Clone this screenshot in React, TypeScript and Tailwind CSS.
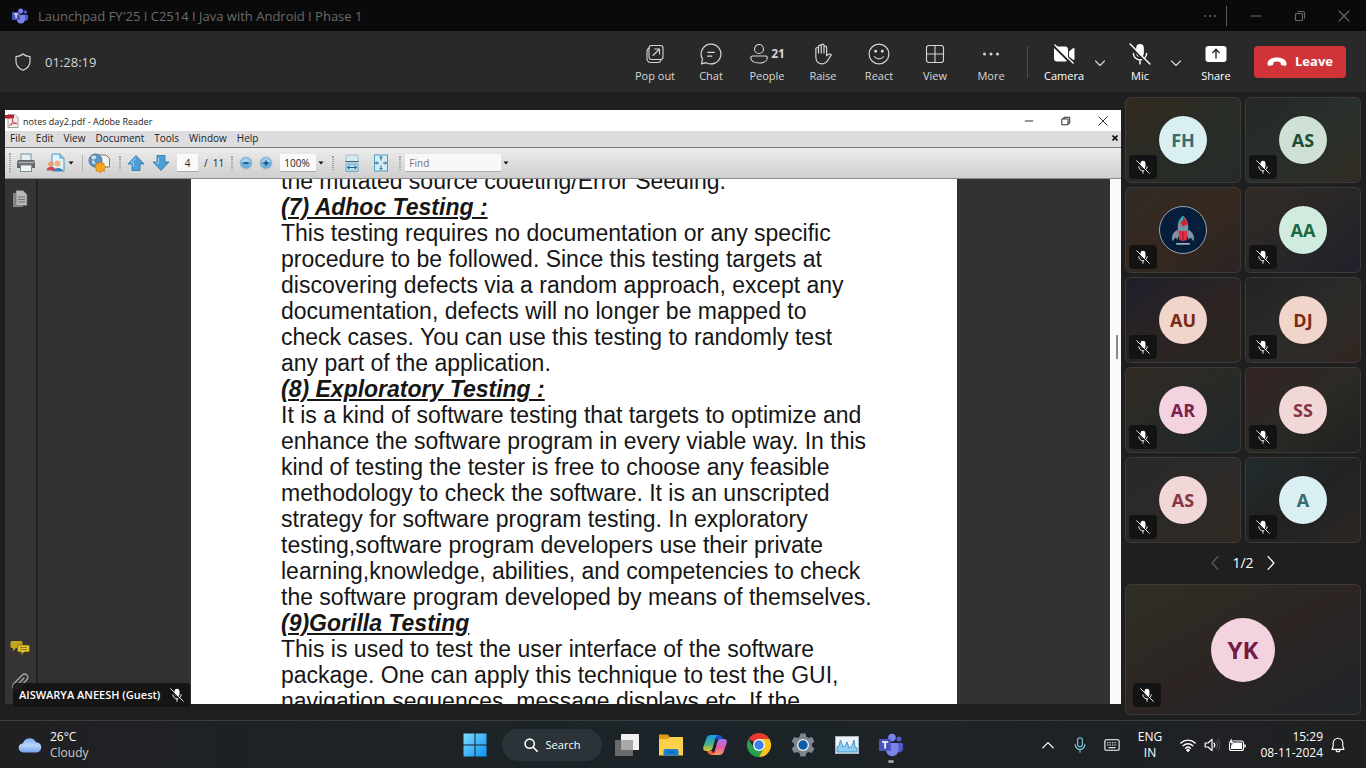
import type { ReactNode } from "react";

const ui = "font-['Open_Sans','Noto_Sans',sans-serif]";

function TeamsLogo({ className }: { className: string }) {
  return (
    <svg viewBox="0 0 24 24" className={className} aria-hidden="true">
      <circle cx="20" cy="6" r="2.6" fill="#5059c9" />
      <path d="M17 10h6a1 1 0 0 1 1 1v5a4 4 0 0 1-7 2z" fill="#5059c9" />
      <circle cx="13" cy="4.6" r="3.8" fill="#7b83eb" />
      <path d="M7 10h11.500a1 1 0 0 1 1 1v6a6 6 0 0 1-12.500 0z" fill="#7b83eb" />
      <rect x="0" y="6" width="12" height="12" rx="1.200" fill="#4b53bc" />
      <path d="M3 9h6.200M6.100 9v6.500" stroke="#fff" strokeWidth="1.700" fill="none" />
    </svg>
  );
}

function Line({ children, className = "size-5" }: { children: ReactNode; className?: string }) {
  return (
    <svg
      viewBox="0 0 20 20"
      className={className}
      fill="none"
      stroke="currentColor"
      strokeWidth="1.1"
      strokeLinecap="round"
      strokeLinejoin="round"
      aria-hidden="true"
    >
      {children}
    </svg>
  );
}

function MicOff({ className, cut }: { className: string; cut: string }) {
  return (
    <svg viewBox="0 0 20 20" className={className} fill="none" aria-hidden="true">
      <rect x="6.500" y="1" width="7" height="11.500" rx="3.500" fill="currentColor" />
      <path d="M4 9.500a6 6 0 0 0 12 0M10 15.500V19" stroke="currentColor" strokeWidth="1.300" strokeLinecap="round" />
      <path d="M1 3l17 17" stroke={cut} strokeWidth="1.700" />
      <path d="M1 1l18 18" stroke="currentColor" strokeWidth="1.300" strokeLinecap="round" />
    </svg>
  );
}

function Chevron({ d, className }: { d: string; className: string }) {
  return (
    <svg viewBox="0 0 12 12" className={className} fill="none" stroke="currentColor" strokeWidth="1.1" strokeLinecap="round" strokeLinejoin="round" aria-hidden="true">
      <path d={d} />
    </svg>
  );
}

function ToolButton({ label, children, bright }: { label: string; children: ReactNode; bright?: boolean }) {
  return (
    <button
      type="button"
      className={
        bright
          ? "flex w-14 flex-col items-center gap-1 pt-1 text-[11px] leading-4 text-white"
          : "flex w-14 flex-col items-center gap-1 pt-1 text-[11px] leading-4 text-[#d6d6d6]"
      }
    >
      <span className="flex h-5 items-center gap-0.5">{children}</span>
      <span className="whitespace-nowrap">{label}</span>
    </button>
  );
}

function TitleBar() {
  return (
    <header className="flex h-[31px] shrink-0 items-center bg-[#0a0a0a] pl-3 text-[#6a6a6a]">
      <TeamsLogo className="size-4" />
      <h1 className="ml-2.5 text-[13px] leading-4">Launchpad FY'25 I C2514 I Java with Android I Phase 1</h1>
      <button type="button" aria-label="More options" className="ml-auto flex h-5 w-8 items-center justify-center">
        <svg viewBox="0 0 12 4" className="h-1 w-3" fill="currentColor"><circle cx="1" cy="2" r="1" /><circle cx="6" cy="2" r="1" /><circle cx="11" cy="2" r="1" /></svg>
      </button>
      <span className="mr-[7px] h-5 w-px bg-[#5c5c5c]" />
      <button type="button" aria-label="Minimize" className="flex w-11 justify-center">
        <Chevron d="M1 6h10" className="size-3" />
      </button>
      <button type="button" aria-label="Restore" className="flex w-11 justify-center">
        <Chevron d="M2.500 3.500h5a1 1 0 0 1 1 1v5a1 1 0 0 1-1 1h-5a1 1 0 0 1-1-1v-5a1 1 0 0 1 1-1zM4 1.500h4.500a2 2 0 0 1 2 2V8" className="size-3" />
      </button>
      <button type="button" aria-label="Close" className="flex w-11 justify-center">
        <Chevron d="M1 1l10 10M11 1L1 11" className="size-3" />
      </button>
    </header>
  );
}

function MeetingBar() {
  return (
    <div className="flex h-[61px] shrink-0 items-center bg-[#292929] pr-5 pl-[13px]">
      <Line>
        <path d="M10 2c2 1.700 4.200 2.400 7 2.500v5c0 4.300-2.600 7-7 8.700-4.400-1.700-7-4.400-7-8.700v-5C5.800 4.400 8 3.700 10 2z" stroke="#e4e4e4" />
      </Line>
      <time className="ml-3 text-[13px] leading-4 text-[#d6d6d6]">01:28:19</time>
      <nav aria-label="Meeting controls" className="ml-auto flex items-center">
        <ToolButton label="Pop out">
          <Line>
            <rect x="4" y="1.500" width="14" height="14" rx="2.500" />
            <path d="M4 4.200a3 3 0 0 0-2 3V15a3.500 3.500 0 0 0 3.500 3.500H13a3 3 0 0 0 2.800-2M8 11.500L14 5.500M9.500 5H14.500v5" />
          </Line>
        </ToolButton>
        <ToolButton label="Chat">
          <Line className="size-[22px]">
            <path d="M10 1a9 9 0 1 1-4.300 16.900L1.300 19l1-4.400A9 9 0 0 1 10 1zM7 8.500h6M7 12h3.700" />
          </Line>
        </ToolButton>
        <ToolButton label="People">
          <Line>
            <circle cx="10" cy="5" r="4.500" />
            <path d="M3.500 12h13A1.800 1.800 0 0 1 18.300 13.800c0 3.200-3.600 5.200-8.300 5.200s-8.300-2-8.300-5.200A1.800 1.800 0 0 1 3.500 12z" />
          </Line>
          <span className="text-[12px] font-bold">21</span>
        </ToolButton>
        <ToolButton label="Raise">
          <Line className="size-[22px]">
            <path d="M3.500 12.500V5.300a1.200 1.200 0 0 1 2.400 0V9M5.900 9V3.200a1.200 1.200 0 0 1 2.500 0V9M8.400 9V2.200a1.200 1.200 0 0 1 2.500 0V9M10.900 9V4a1.200 1.200 0 0 1 2.400 0v7.500c1-1.300 2.200-1.700 3.700-1.300.7.200.6.800.2 1.200-2.200 2-2.700 7.600-7.900 7.600-3.600 0-5.800-2.200-5.800-6.500" />
          </Line>
        </ToolButton>
        <ToolButton label="React">
          <Line className="size-[22px]">
            <circle cx="10" cy="10" r="9" />
            <path d="M6 12.500c2 2.600 6 2.600 8 0" />
            <circle cx="7" cy="7.500" r=".8" fill="currentColor" />
            <circle cx="13" cy="7.500" r=".8" fill="currentColor" />
          </Line>
        </ToolButton>
        <ToolButton label="View">
          <Line>
            <rect x="1.500" y="1.500" width="17" height="17" rx="2.500" />
            <path d="M10 1.500v17M1.500 10h17" />
          </Line>
        </ToolButton>
        <ToolButton label="More">
          <svg viewBox="0 0 20 20" className="size-5" fill="currentColor"><circle cx="3.500" cy="10" r="1.500" /><circle cx="10" cy="10" r="1.500" /><circle cx="16.500" cy="10" r="1.500" /></svg>
        </ToolButton>
        <span className="mx-2 h-8 w-px bg-[#4d4d4d]" />
        <ToolButton label="Camera" bright>
          <svg viewBox="0 0 22 22" className="size-[22px]" fill="currentColor">
            <rect x="1" y="3.500" width="14" height="15" rx="3" />
            <path d="M16 8.500l4-3.200c.7-.5 1.500-.2 1.500.7v10c0 .9-.8 1.200-1.500.7l-4-3.200z" />
            <path d="M1 3.500l18 18" stroke="#292929" strokeWidth="2" />
            <path d="M1.500 1.500l19 19" stroke="currentColor" strokeWidth="1.300" />
          </svg>
        </ToolButton>
        <button type="button" aria-label="Camera options" className="mr-1 flex w-4 justify-center pt-0.5 text-[#d6d6d6]">
          <Chevron d="M1.500 4L6 8.500 10.500 4" className="size-3" />
        </button>
        <ToolButton label="Mic" bright>
          <MicOff className="size-[22px]" cut="#292929" />
        </ToolButton>
        <button type="button" aria-label="Mic options" className="mr-1 flex w-4 justify-center pt-0.5 text-[#d6d6d6]">
          <Chevron d="M1.500 4L6 8.500 10.500 4" className="size-3" />
        </button>
        <ToolButton label="Share" bright>
          <svg viewBox="0 0 22 22" className="size-[22px]">
            <rect x="0.500" y="3" width="21" height="16" rx="3" fill="#fff" />
            <path d="M11 15.500V6.500M7.500 10L11 6.300 14.500 10" fill="none" stroke="#292929" strokeWidth="1.400" />
          </svg>
        </ToolButton>
        <button type="button" className="ml-2.5 flex h-8 w-[92px] items-center justify-center gap-2 rounded bg-[#d13438] text-[13px] font-bold text-white">
          <svg viewBox="0 0 20 10" className="h-2.5 w-5" fill="currentColor" aria-hidden="true">
            <path d="M10 .5c5 0 9.500 2.300 9.500 6 0 1.500-.6 2.500-1.800 2.300l-2.800-.6c-.9-.2-1.300-.8-1.300-1.700V5.200c-2.300-.8-4.900-.8-7.200 0v1.300c0 .9-.4 1.500-1.300 1.700l-2.800.6C1.100 9 .5 8 .5 6.500.5 2.800 5 .5 10 .5z" />
          </svg>
          Leave
        </button>
      </nav>
    </div>
  );
}

function Grip() {
  return <span className="h-5 w-0.5 border-x border-dotted border-[#a0a0a0]" />;
}

function Caret() {
  return (
    <svg viewBox="0 0 6 4" className="h-1 w-1.5 shrink-0" aria-hidden="true"><path d="M0.500 0.500h5L3 3.500z" fill="#111" /></svg>
  );
}

function BlueArrow({ up }: { up?: boolean }) {
  return (
    <svg viewBox="0 0 18 18" className="size-[18px]" aria-hidden="true">
      <path
        d={up ? "M9 1.500L17 10h-4v6.500H5V10H1z" : "M9 16.500L1 8h4V1.500h8V8h4z"}
        fill="#4a9fd4"
        stroke="#2c73a6"
        strokeWidth=".8"
      />
      <path d={up ? "M9 3.500L4 9h2.500v4" : "M6.500 3.500V9H4"} fill="none" stroke="#9ed2ee" />
    </svg>
  );
}

function ZoomDot({ plus }: { plus?: boolean }) {
  return (
    <svg viewBox="0 0 14 14" className="size-3.5" aria-hidden="true">
      <circle cx="7" cy="7" r="6" fill="#69b0dc" stroke="#a9bccb" />
      <path d="M2.500 6a4.600 4.600 0 0 1 9 0" fill="#a6d4ef" />
      <path d={plus ? "M4.500 7h5M7 4.500v5" : "M4.500 7h5"} stroke="#174a7c" strokeWidth="1.500" />
    </svg>
  );
}

const menus = ["File", "Edit", "View", "Document", "Tools", "Window", "Help"];

function ReaderToolbar() {
  return (
    <div className="flex h-[31px] shrink-0 items-center border-b border-[#8b8b8b] bg-linear-to-b from-[#ececec] to-[#cfcfcf] pl-1 text-[10px] text-[#222]">
      <Grip />
      <button type="button" aria-label="Print" className="ml-[5px]">
        <svg viewBox="0 0 20 20" className="size-5">
          <rect x="5" y="1" width="10" height="7" fill="#e5f1f5" stroke="#7e9199" />
          <path d="M2 7h16l1 2v6H1V9z" fill="#62676a" />
          <path d="M2 9.500h16" stroke="#a9aeb0" strokeWidth="1.500" />
          <rect x="4.500" y="12" width="11" height="6.500" fill="#edf5f7" stroke="#7e8a90" />
        </svg>
      </button>
      <button type="button" aria-label="Collaborate" className="ml-2.5 flex items-center gap-0.5">
        <svg viewBox="0 0 20 20" className="size-5">
          <path d="M6 1h8l4 4v13H6z" fill="#e2f2fa" stroke="#4b9ac4" />
          <path d="M14 1v4h4" fill="#9fcfe8" stroke="#4b9ac4" />
          <path d="M8 18c0-4 8-4 9 0z" fill="#2f82bb" />
          <circle cx="11.500" cy="10.500" r="3" fill="#eeb27f" />
          <circle cx="5" cy="11" r="2.800" fill="#e8a071" />
          <path d="M.5 17.500c0-5 9-5 9.500 0z" fill="#c34a5b" />
        </svg>
        <Caret />
      </button>
      <span className="ml-2 h-4 w-px bg-[#b0b0b0]" />
      <button type="button" aria-label="Create PDF online" className="ml-[5px]">
        <svg viewBox="0 0 22 20" className="h-5 w-[22px]">
          <path d="M10 2h8l3.500 3.500V14H10z" fill="#f1f1ee" stroke="#777" />
          <circle cx="7.500" cy="7.500" r="6.500" fill="#5c94c4" stroke="#47749e" />
          <path d="M3 4c3-3 6-1 5 1s-4 1-4 4 4 1 5 3" fill="#cfdfe5" />
          <path d="M12 8.500l1.500 2 2.600-.4-.2 2.500 2.300 1.300-2 1.700.3 2.500-2.600-.2-1.600 2-1.700-2-2.500.4.2-2.600-2-1.500 2-1.400-.3-2.500 2.600.3z" fill="#f3a51f" stroke="#c87c10" strokeWidth=".7" />
        </svg>
      </button>
      <span className="ml-[9px]"><Grip /></span>
      <button type="button" aria-label="Previous page" className="ml-1.5"><BlueArrow up /></button>
      <button type="button" aria-label="Next page" className="ml-[7px]"><BlueArrow /></button>
      <input aria-label="Page number" defaultValue="4" className="ml-[7px] h-[18px] w-[21px] border-b border-[#aaa] bg-[#fafafa] text-center" />
      <span className="ml-1.5 whitespace-pre">/  11</span>
      <span className="ml-[7px]"><Grip /></span>
      <button type="button" aria-label="Zoom out" className="ml-1.5"><ZoomDot /></button>
      <button type="button" aria-label="Zoom in" className="ml-1.5"><ZoomDot plus /></button>
      <input aria-label="Zoom level" defaultValue="100%" className="ml-[7px] h-[18px] w-9 border-b border-[#aaa] bg-[#fafafa] pl-1" />
      <button type="button" aria-label="Zoom presets" className="ml-0.5"><Caret /></button>
      <span className="ml-2"><Grip /></span>
      <button type="button" aria-label="Fit width" className="ml-2.5">
        <svg viewBox="0 0 16 18" className="h-[18px] w-4">
          <path d="M2 1h12v7H2z" fill="#d5ebf3" stroke="#a5bcc7" /><path d="M1.500 7.500h13" stroke="#346f91" />
          <path d="M2 10h12v7.500H2z" fill="#b8dcec" stroke="#6da6c1" />
          <path d="M3.500 13.500h9M5.500 11.500l-2 2 2 2M10.500 11.500l2 2-2 2" fill="none" stroke="#23658b" />
        </svg>
      </button>
      <button type="button" aria-label="Fit page" className="ml-[13px]">
        <svg viewBox="0 0 16 18" className="h-[18px] w-4">
          <rect x="1.500" y="1" width="13" height="16" fill="#d3edf6" stroke="#4f9bc0" />
          <path d="M8 2.500v4M6.500 4L8 2.500 9.500 4M8 15.500v-4M6.500 14L8 15.500 9.500 14M2.500 9h3.500M4 7.500L2.500 9 4 10.500M13.500 9H10M12 7.500L13.500 9 12 10.500" fill="none" stroke="#23658b" />
        </svg>
      </button>
      <span className="ml-2.5"><Grip /></span>
      <input aria-label="Find" placeholder="Find" className="ml-1 h-[18px] w-24 border-b border-[#aaa] bg-[#f8f8f8] pl-1 placeholder:text-[#777]" />
      <button type="button" aria-label="Find options" className="ml-0.5"><Caret /></button>
    </div>
  );
}

const sections = [
  {
    title: "(7) Adhoc Testing :",
    lines: [
      "This testing requires no documentation or any specific",
      "procedure to be followed. Since this testing targets at",
      "discovering defects via a random approach, except any",
      "documentation, defects will no longer be mapped to",
      "check cases. You can use this testing to randomly test",
      "any part of the application.",
    ],
  },
  {
    title: "(8) Exploratory Testing :",
    lines: [
      "It is a kind of software testing that targets to optimize and",
      "enhance the software program in every viable way. In this",
      "kind of testing the tester is free to choose any feasible",
      "methodology to check the software. It is an unscripted",
      "strategy for software program testing. In exploratory",
      "testing,software program developers use their private",
      "learning,knowledge, abilities, and competencies to check",
      "the software program developed by means of themselves.",
    ],
  },
  {
    title: "(9)Gorilla Testing",
    lines: [
      "This is used to test the user interface of the software",
      "package. One can apply this technique to test the GUI,",
      "navigation sequences, message displays etc. If the",
    ],
  },
];

function Reader() {
  return (
    <section aria-label="Shared screen" className="relative flex min-w-0 flex-1 flex-col">
      <div className="flex h-[21px] shrink-0 items-center bg-white text-[#1a1a1a]">
        <svg viewBox="0 0 14 14" className="size-3.5" aria-hidden="true">
          <path d="M3 .5h7l3 3v10H3z" fill="#f4efef" stroke="#888" strokeWidth=".8" />
          <path d="M0 1h9v3.500H0z" fill="#c41e25" />
          <path d="M4.500 11.500C8 8.500 8 6 7.500 5c-1 1.500 1.500 4.500 4.500 4.500-3-.5-6 .5-7.500 2z" fill="none" stroke="#c8333a" strokeWidth=".9" />
        </svg>
        <h2 className="ml-1 pt-0.5 text-[9px] leading-4">notes day2.pdf - Adobe Reader</h2>
        <button type="button" aria-label="Minimize reader" className="ml-auto flex w-[37px] justify-center"><Chevron d="M1.500 6h9" className="size-2.5" /></button>
        <button type="button" aria-label="Restore reader" className="flex w-[37px] justify-center">
          <Chevron d="M1.500 3.500h7v7h-7zM3.500 3.500v-2h7v7h-2" className="size-2.5" />
        </button>
        <button type="button" aria-label="Close reader" className="flex w-[37px] justify-center"><Chevron d="M1 1l10 10M11 1L1 11" className="size-2.5" /></button>
      </div>
      <div className="flex h-[17px] shrink-0 items-center gap-2.5 border-b border-[#77777c] bg-[#dddddf] pr-[3px] pb-0.5 pl-[5px] text-[10px] leading-3 text-[#222]">
        {menus.map((m) => (
          <button type="button" key={m}>{m}</button>
        ))}
        <button type="button" aria-label="Close document" className="ml-auto">
          <svg viewBox="0 0 6 6" className="size-1.5"><path d="M.5.5l5 5M5.500.5l-5 5" stroke="#111" strokeWidth="1.600" /></svg>
        </button>
      </div>
      <ReaderToolbar />
      <div className="flex min-h-0 flex-1 bg-[#323232]">
        <div className="flex w-[33px] shrink-0 flex-col items-center border-r-2 border-[#232323] bg-[#353334] pt-2.5 pr-0.5">
          <button type="button" aria-label="Pages">
            <svg viewBox="0 0 18 20" className="h-5 w-[18px]">
              <path d="M2 4h10v14H2z" fill="#858585" />
              <path d="M5 1.500h7l4 4v11H5z" fill="#b8b8b8" stroke="#6a6a6a" strokeWidth=".6" />
              <path d="M7 8h7M7 10.500h7M7 13h7" stroke="#707070" />
            </svg>
          </button>
          <button type="button" aria-label="Comments" className="mt-auto">
            <svg viewBox="0 0 20 16" className="h-4 w-5">
              <path d="M2 1h9a1.500 1.500 0 0 1 1.500 1.500v4A1.500 1.500 0 0 1 11 8H6l-3 3V8H2A1.500 1.500 0 0 1 .5 6.500v-4A1.500 1.500 0 0 1 2 1z" fill="#c4a51d" />
              <path d="M9 5h9a1.500 1.500 0 0 1 1.500 1.500v4A1.500 1.500 0 0 1 18 12h-4l-2.500 3v-3H9a1.500 1.500 0 0 1-1.500-1.500v-4A1.500 1.500 0 0 1 9 5z" fill="#e2c12d" stroke="#6b5a14" strokeWidth=".7" />
              <path d="M10 7.500h7M10 9.500h7" stroke="#7c691c" strokeWidth=".8" />
            </svg>
          </button>
          <button type="button" aria-label="Attachments" className="mt-4 mb-3">
            <svg viewBox="0 0 20 20" className="size-5" fill="none" stroke="#a5a5a5" strokeWidth="1.400" strokeLinecap="round">
              <path d="M14 6l-7.500 8a1.600 1.600 0 0 0 2.400 2.200L17 7.500a3.200 3.200 0 0 0-4.700-4.400L4 11.500a4.300 4.300 0 0 0 1 6.500" />
            </svg>
          </button>
        </div>
        <div className="flex min-w-0 flex-1 justify-center overflow-hidden">
          <article className="w-[766px] bg-white pl-[90px] font-['Liberation_Sans',Arial,sans-serif] text-[23px] leading-[26px] whitespace-nowrap text-[#161616]">
            <p className="-mt-[11px]">the mutated source codeting/Error Seeding.</p>
            {sections.map((s) => (
              <section key={s.title}>
                <h3 className="font-bold italic underline decoration-2 underline-offset-2">{s.title}</h3>
                {s.lines.map((l) => (
                  <p key={l}>{l}</p>
                ))}
              </section>
            ))}
          </article>
        </div>
        <div className="flex w-[11px] shrink-0 justify-end bg-[#fafafa] pt-[156px] pr-[3px]">
          <span className="h-6 w-0.5 bg-[#8a8a8a]" />
        </div>
      </div>
      <div className="absolute -bottom-[3px] left-2 flex h-6 items-center gap-2.5 rounded bg-[#111111e0] px-1.5 text-[11px] font-semibold text-white">
        <span>AISWARYA ANEESH (Guest)</span>
        <MicOff className="size-3.5" cut="#111111" />
      </div>
    </section>
  );
}

type Person = { initials: string; avatar: string; tile: string };

const people: Person[] = [
  { initials: "FH", avatar: "bg-[#d9eff2] text-[#37696d]", tile: "from-[#33291f] via-[#282c26] to-[#252c28]" },
  { initials: "AS", avatar: "bg-[#cfe0d5] text-[#1d4d35]", tile: "from-[#252725] via-[#28302b] to-[#302b23]" },
  { initials: "", avatar: "bg-[#061e3c] border border-[#9aa4b0]", tile: "from-[#302b26] via-[#35281f] to-[#2c2424]" },
  { initials: "AA", avatar: "bg-[#d0ecde] text-[#1d6843]", tile: "from-[#312b26] via-[#292727] to-[#20202a]" },
  { initials: "AU", avatar: "bg-[#f0d5cb] text-[#7b2a15]", tile: "from-[#1e1e2a] via-[#2c2424] to-[#29251f]" },
  { initials: "DJ", avatar: "bg-[#f0d5cb] text-[#7b2a15]", tile: "from-[#222222] via-[#2b2c29] to-[#312621]" },
  { initials: "AR", avatar: "bg-[#f4d3e0] text-[#7d1f49]", tile: "from-[#302923] via-[#292a26] to-[#20272b]" },
  { initials: "SS", avatar: "bg-[#f1d7d8] text-[#843542]", tile: "from-[#332323] via-[#2c2a24] to-[#202020]" },
  { initials: "AS", avatar: "bg-[#f1d7d8] text-[#843542]", tile: "from-[#29272b] via-[#2c2a28] to-[#302822]" },
  { initials: "A", avatar: "bg-[#d9eff2] text-[#37696d]", tile: "from-[#222c2c] via-[#222224] to-[#2b2723]" },
];

function Rocket() {
  return (
    <svg viewBox="0 0 32 40" className="h-8 w-6" aria-hidden="true">
      <path d="M8 20c-5 3-8 8-6 15l4-5 3 3 1-11zM24 20c5 3 8 8 6 15l-4-5-3 3-1-11z" fill="#8494a3" />
      <path d="M16 1c4 3 7 8 7 14v14H9V15c0-6 3-11 7-14z" fill="#7f8f9c" />
      <path d="M16 3c4 3 6 6 6 10l-6 2-4-5c0-3 1-5 4-7z" fill="#cf2335" />
      <path d="M11 7l5-6v5l-5 6z" fill="#28b1c2" />
      <path d="M11 19c3 2 7 2 10 0" fill="none" stroke="#43bdca" strokeWidth="2" />
      <path d="M10 21h12l-1 12-5 2-5-2z" fill="#e62e42" />
      <path d="M16 22v12" stroke="#6b1c35" />
      <path d="M7 38.500h18" stroke="#b9c7d2" strokeWidth="2" />
    </svg>
  );
}

function MutedBadge({ className }: { className: string }) {
  return (
    <span className={className}>
      <MicOff className="size-3.5" cut="#111111" />
    </span>
  );
}

function Tile({ person }: { person: Person }) {
  return (
    <li className={`relative flex h-[86px] items-center justify-center rounded-md border border-[#3d3b39] bg-linear-to-br ${person.tile}`}>
      <div className={`flex size-12 items-center justify-center rounded-full text-lg font-bold shadow ${person.avatar}`}>
        {person.initials || <Rocket />}
      </div>
      <MutedBadge className="absolute bottom-[3px] left-[3px] flex h-6 w-7 items-center justify-center rounded bg-[#131313] text-white" />
    </li>
  );
}

function Roster() {
  return (
    <aside aria-label="Participants" className="flex w-[236px] shrink-0 flex-col pt-[5px]">
      <ul className="grid grid-cols-2 gap-1">
        {people.map((p, i) => (
          <Tile key={i} person={p} />
        ))}
      </ul>
      <div className="flex h-[41px] items-center justify-center gap-2.5 pb-0.5 text-sm text-white">
        <button type="button" aria-label="Previous participants" className="text-[#5c5c5c]"><Chevron d="M8.500 .5L3.500 6l5 5.500" className="size-3.5" /></button>
        <span>1/2</span>
        <button type="button" aria-label="Next participants"><Chevron d="M3.500 .5L8.500 6l-5 5.500" className="size-3.5" /></button>
      </div>
      <div className="relative flex h-[131px] items-center justify-center rounded-md border border-[#403a36] bg-linear-to-br from-[#2f2f24] via-[#2c2523] to-[#20242a]">
        <div className="flex size-16 items-center justify-center rounded-full bg-[#f4d3e0] text-2xl font-bold text-[#731b45]">YK</div>
        <MutedBadge className="absolute bottom-[7px] left-[7px] flex h-6 w-7 items-center justify-center rounded bg-[#131313] text-white" />
      </div>
    </aside>
  );
}

function TaskButton({ label, children, running }: { label: string; children: ReactNode; running?: boolean }) {
  return (
    <button type="button" aria-label={label} className="relative flex h-10 w-11 items-center justify-center">
      {children}
      {running && <span className="absolute bottom-0.5 h-[3px] w-1.5 rounded-full bg-[#9a9a9a]" />}
    </button>
  );
}

function Taskbar() {
  return (
    <footer className="grid h-12 shrink-0 grid-cols-[1fr_auto_1fr] items-center border-t border-[#3d3f40] bg-linear-to-r from-[#202022] via-[#1b2429] to-[#202022] text-xs leading-4 text-white">
      <button type="button" className="flex items-center gap-2 justify-self-start pl-[18px] text-left">
        <svg viewBox="0 0 26 18" className="h-[18px] w-6" aria-hidden="true">
          <defs><linearGradient id="cloud" x1="0" y1="0" x2="0" y2="1"><stop offset="0" stopColor="#80abef" /><stop offset=".5" stopColor="#b9d3fb" /><stop offset="1" stopColor="#78a4ed" /></linearGradient></defs>
          <path d="M6 17a5 5 0 0 1-.6-10A7.500 7.500 0 0 1 19.400 6 5.500 5.500 0 0 1 20 17z" fill="url(#cloud)" />
        </svg>
        <span className="flex flex-col">
          <span>26°C</span>
          <span className="text-[#cccccc]">Cloudy</span>
        </span>
      </button>
      <div className="flex items-center">
        <TaskButton label="Start">
          <svg viewBox="0 0 24 24" className="size-6">
            <defs><linearGradient id="win" x1="0" y1="0" x2="1" y2="1"><stop offset="0" stopColor="#7fdcff" /><stop offset="1" stopColor="#0a90f2" /></linearGradient></defs>
            <path d="M.5.5h11v11H.5zM12.500.5h11v11h-11zM.5 12.500h11v11H.5zM12.500 12.500h11v11h-11z" fill="url(#win)" />
          </svg>
        </TaskButton>
        <button type="button" className="mr-[3px] ml-[5px] flex h-8 w-[100px] items-center justify-center gap-2 rounded-full bg-[#2b3338] text-[11px]">
          <svg viewBox="0 0 14 14" className="size-3.5" fill="none" stroke="#fff" strokeWidth="1.600" strokeLinecap="round"><circle cx="5.700" cy="5.700" r="4.600" /><path d="M9.200 9.200l4 4" /></svg>
          Search
        </button>
        <TaskButton label="Task view">
          <svg viewBox="0 0 24 24" className="size-6"><rect x="6" y="1" width="18" height="16" rx=".5" fill="#f1f1f1" /><rect x="0" y="7" width="18" height="16" rx=".5" fill="#686a6c" /><path d="M6 7h12v10H6z" fill="#a8a8a8" /></svg>
        </TaskButton>
        <TaskButton label="File Explorer">
          <svg viewBox="0 0 24 24" className="size-6"><path d="M0 1.500h9l2 3v5H0z" fill="#dda010" /><path d="M0 6h9l2-2h13v18.500H0z" fill="#fcd04b" /><path d="M4.500 22.500V18a2 2 0 0 1 2-2h11a2 2 0 0 1 2 2v4.500z" fill="#1383d8" /><path d="M8 19h8" stroke="#0c5ca0" strokeWidth="1.500" /></svg>
        </TaskButton>
        <TaskButton label="Copilot">
          <svg viewBox="0 0 24 24" className="size-6">
            <defs>
              <linearGradient id="copA" x1="0" y1="0" x2="0" y2="1"><stop offset="0" stopColor="#169be8" /><stop offset=".55" stopColor="#40b08c" /><stop offset="1" stopColor="#e5c82f" /></linearGradient>
              <linearGradient id="copB" x1="0" y1="0" x2="0" y2="1"><stop offset="0" stopColor="#a477f5" /><stop offset=".5" stopColor="#e357ac" /><stop offset="1" stopColor="#fc9c52" /></linearGradient>
            </defs>
            <path d="M10 2h6c2 0 3 1 3.500 3l.7 2.500H15z" fill="#1d50c7" />
            <path d="M8 2h7c-2 1-2.500 3-3.200 5.500l-2 7C9 17 8 18 5.500 18H3c-2.500 0-3.400-2-2.500-4.500L3.500 5C4.400 3 5.600 2 8 2z" fill="url(#copA)" />
            <path d="M4 18h5l1 1.500c.5 1.500 1.500 2.500 3 2.500H8.500C6 22 5 20 4 18z" fill="#ee6040" />
            <path d="M16 22H9c2-1 2.500-3 3.200-5.500l2-7C15 7 16 6 18.500 6H21c2.500 0 3.400 2 2.500 4.500L20.500 19c-.9 2-2.100 3-4.500 3z" fill="url(#copB)" />
          </svg>
        </TaskButton>
        <TaskButton label="Chrome">
          <svg viewBox="0 0 24 24" className="size-6">
            <path d="M12 12L1.600 6A12 12 0 0 1 22.400 6z" fill="#e53b30" />
            <path d="M12 12V6h10.400A12 12 0 0 1 12 24z" fill="#fdc51a" />
            <path d="M1.600 6a12 12 0 0 0 10.400 18l5.200-9L12 12 6.800 15z" fill="#2b9f4b" />
            <circle cx="12" cy="12" r="6" fill="#fff" /><circle cx="12" cy="12" r="4.700" fill="#3d80ec" />
          </svg>
        </TaskButton>
        <TaskButton label="Settings">
          <svg viewBox="0 0 24 24" className="size-6">
            <path d="M9.500 0.500h5l.8 3.300 2.300 1.300 3.300-1 2.500 4.300-2.500 2.300v2.600l2.500 2.300-2.500 4.300-3.300-1-2.300 1.300-.8 3.300h-5l-.8-3.300-2.300-1.300-3.300 1-2.500-4.300 2.500-2.300v-2.600L.6 8.400l2.500-4.300 3.300 1 2.300-1.300z" fill="#7d8790" />
            <circle cx="12" cy="12" r="6" fill="#e8edf0" /><circle cx="12" cy="12" r="4.700" fill="#0e5ba5" />
          </svg>
        </TaskButton>
        <TaskButton label="Performance monitor">
          <svg viewBox="0 0 24 24" className="size-6"><rect x=".5" y="3.500" width="23" height="17" fill="#edf3f7" stroke="#a9b5bd" /><path d="M2 14l2-1 1.500-6L8 14l2-1 2-4 2 6 3-2 2-6 1 7 2 1v4H2z" fill="#90cdf5" stroke="#2a85c4" strokeWidth=".8" /></svg>
        </TaskButton>
        <TaskButton label="Teams" running><TeamsLogo className="size-6" /></TaskButton>
      </div>
      <div className="flex items-center justify-self-end pr-5">
        <button type="button" aria-label="Hidden icons"><Chevron d="M1.500 8.500L6 4l4.500 4.500" className="size-3.5" /></button>
        <button type="button" aria-label="Microphone in use" className="ml-[17px] text-[#7ccbe0]">
          <Line className="size-4"><rect x="7" y="1" width="6" height="11" rx="3" strokeWidth="1.400" /><path d="M4 9.500a6 6 0 0 0 12 0M10 15.500V19" strokeWidth="1.400" /></Line>
        </button>
        <button type="button" aria-label="Touch keyboard" className="ml-4">
          <svg viewBox="0 0 18 14" className="h-3.5 w-4" fill="none" stroke="#fff" strokeWidth="1.200"><rect x="1" y="1" width="16" height="12" rx="1.500" /><path d="M3.500 4.500h11M3.500 7h11" strokeDasharray="1.500 1.200" /><path d="M5 10h8" /></svg>
        </button>
        <button type="button" className="ml-2 w-11 text-center leading-4">ENG<br />IN</button>
        <button type="button" aria-label="Network, sound and battery" className="ml-2 flex items-center gap-2">
          <Line className="size-4">
            <path d="M1 7.500a13 13 0 0 1 18 0M4 10.800a8.500 8.500 0 0 1 12 0M7 14a4.400 4.400 0 0 1 6 0" strokeWidth="1.800" />
            <circle cx="10" cy="16.500" r="1.500" fill="currentColor" />
          </Line>
          <Line className="size-4">
            <path d="M1.500 7.500H5l5-4.500v14l-5-4.500H1.500zM12.500 7.500a4 4 0 0 1 0 5" strokeWidth="1.500" />
            <path d="M15 5a7 7 0 0 1 0 10M17.500 3a10 10 0 0 1 0 14" stroke="#666" />
          </Line>
          <svg viewBox="0 0 18 14" className="h-3.5 w-4.5" fill="none" stroke="#fff" strokeWidth="1.100"><rect x="1.500" y="3" width="14" height="9.500" rx="2" /><path d="M3.500 5h10v5.500h-10z" fill="#fff" /><path d="M17 6.500v3" strokeWidth="1.500" /><path d="M3.500 0L.5 5h3L2.500 8l4-4.500h-2z" fill="#fff" stroke="#202022" strokeWidth=".5" /></svg>
        </button>
        <button type="button" className="ml-[11px] w-[66px] text-right whitespace-nowrap">15:29<br />08-11-2024</button>
        <button type="button" aria-label="Notifications" className="ml-[7px]">
          <Line className="size-4"><path d="M10 1.500a6 6 0 0 1 6 6v4l1.500 4h-15l1.500-4v-4a6 6 0 0 1 6-6zM7.500 16a2.500 2.500 0 0 0 5 0" strokeWidth="1.400" /></Line>
        </button>
      </div>
    </footer>
  );
}

export default function App() {
  return (
    <div className={`flex h-screen flex-col overflow-hidden bg-[#1f1f1f] ${ui}`}>
      <TitleBar />
      <MeetingBar />
      <main className="flex min-h-0 flex-1 gap-1 pr-[5px] pl-[5px]">
        <div className="flex min-w-0 flex-1 pt-[18px] pb-4">
          <Reader />
        </div>
        <Roster />
      </main>
      <Taskbar />
    </div>
  );
}
